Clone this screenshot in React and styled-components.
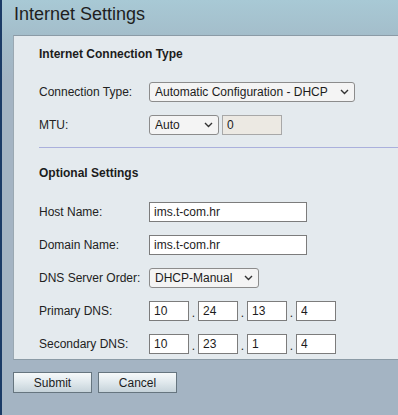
import React from 'react';
import styled, { createGlobalStyle } from 'styled-components';

const GlobalStyle = createGlobalStyle`
  html, body {
    margin: 0;
    padding: 0;
    background: #a4b4c3;
  }
  body {
    font-family: "Liberation Sans", Arial, sans-serif;
    color: #1c1c1c;
  }
`;

const Page = styled.div`
  width: 398px;
  height: 415px;
  box-sizing: border-box;
  border-left: 2px solid #1b3b66;
  background: linear-gradient(to bottom, #a8c9d5 0px, #a3bcc9 40px, #a4b4c3 80px, #a4b4c3 100%);
  overflow: hidden;
`;

const Header = styled.div`
  height: 35px;
  box-sizing: border-box;
  padding: 3px 0 0 12px;
`;

const Title = styled.h1`
  margin: 0;
  font-size: 18px;
  font-weight: normal;
  line-height: 22px;
  color: #1e1e1e;
`;

const Panel = styled.div`
  margin-left: 11px;
  background: #e4eaee;
  border-top: 1px solid #8b9ba6;
  border-left: 1px solid #9aa8b2;
  border-bottom: 1px solid #8b9ba6;
  padding: 11px 0 5px 25px;
`;

const SectionTitle = styled.div`
  font-size: 12px;
  font-weight: bold;
  line-height: 14px;
  margin-bottom: ${({ $gap }) => $gap}px;
`;

const Rows = styled.div`
  display: flex;
  flex-direction: column;
  gap: 13px;
`;

const Row = styled.div`
  display: grid;
  grid-template-columns: 110px auto;
  align-items: center;
  height: 20px;
`;

const Label = styled.span`
  font-size: 12px;
  color: #222;
`;

const Controls = styled.div`
  display: flex;
  align-items: center;
`;

const SelectWrap = styled.div`
  position: relative;
  width: ${({ $w }) => $w}px;
  height: 20px;
`;

const Select = styled.select`
  appearance: none;
  width: 100%;
  height: 100%;
  box-sizing: border-box;
  border: 1px solid #8c8c8c;
  border-radius: 3px;
  background: #f4f4f4;
  font-family: inherit;
  font-size: 12px;
  color: #1c1c1c;
  padding: 0 0 0 5px;
  margin: 0;
  outline: none;
`;

const Chevron = styled.svg`
  position: absolute;
  right: 6px;
  top: 7px;
  width: 9px;
  height: 6px;
  pointer-events: none;
`;

const TextInput = styled.input`
  width: ${({ $w }) => $w}px;
  height: 20px;
  box-sizing: border-box;
  border: 1px solid #7c7c7c;
  background: ${({ disabled }) => (disabled ? '#ece9e3' : '#fff')};
  font-family: inherit;
  font-size: 12px;
  color: #1c1c1c;
  padding: 0 0 0 4px;
  margin: 0 0 0 ${({ $ml }) => $ml || 0}px;
  outline: none;
  &:disabled {
    border-color: #a8a8a8;
    color: #1c1c1c;
  }
`;

const Dot = styled.span`
  width: 9px;
  text-align: center;
  font-size: 12px;
  align-self: flex-end;
  line-height: 16px;
`;

const Divider = styled.div`
  height: 1px;
  background: #aab0dc;
  margin: 12px 0 18px;
`;

const Buttons = styled.div`
  display: flex;
  gap: 6px;
  margin: 12px 0 0 11px;
`;

const Button = styled.button`
  width: 79px;
  height: 21px;
  box-sizing: border-box;
  border: 1px solid #66757f;
  background: linear-gradient(to bottom, #f6f9fa 0%, #e2eaee 45%, #c6d3da 100%);
  font-family: inherit;
  font-size: 12px;
  color: #1c1c1c;
  padding: 0;
`;

const SelectBox = ({ width, value, options }) => (
  <SelectWrap $w={width}>
    <Select defaultValue={value}>
      {options.map((o) => (
        <option key={o}>{o}</option>
      ))}
    </Select>
    <Chevron viewBox="0 0 9 6">
      <path d="M1 1 L4.5 4.5 L8 1" fill="none" stroke="#333" strokeWidth="1.4" />
    </Chevron>
  </SelectWrap>
);

const IpField = ({ parts }) => (
  <Controls>
    {parts.map((p, i) => (
      <React.Fragment key={i}>
        {i > 0 && <Dot>.</Dot>}
        <TextInput $w={40} defaultValue={p} />
      </React.Fragment>
    ))}
  </Controls>
);

export default function App() {
  return (
    <>
      <GlobalStyle />
      <Page>
        <Header>
          <Title>Internet Settings</Title>
        </Header>
        <Panel>
          <SectionTitle $gap={21}>Internet Connection Type</SectionTitle>
          <Rows>
            <Row>
              <Label>Connection Type:</Label>
              <SelectBox width={206} value="Automatic Configuration - DHCP" options={['Automatic Configuration - DHCP']} />
            </Row>
            <Row>
              <Label>MTU:</Label>
              <Controls>
                <SelectBox width={70} value="Auto" options={['Auto', 'Manual']} />
                <TextInput $w={60} $ml={3} defaultValue="0" disabled />
              </Controls>
            </Row>
          </Rows>
          <Divider />
          <SectionTitle $gap={22}>Optional Settings</SectionTitle>
          <Rows>
            <Row>
              <Label>Host Name:</Label>
              <TextInput $w={158} defaultValue="ims.t-com.hr" />
            </Row>
            <Row>
              <Label>Domain Name:</Label>
              <TextInput $w={158} defaultValue="ims.t-com.hr" />
            </Row>
            <Row>
              <Label>DNS Server Order:</Label>
              <SelectBox width={110} value="DHCP-Manual" options={['DHCP-Manual']} />
            </Row>
            <Row>
              <Label>Primary DNS:</Label>
              <IpField parts={['10', '24', '13', '4']} />
            </Row>
            <Row>
              <Label>Secondary DNS:</Label>
              <IpField parts={['10', '23', '1', '4']} />
            </Row>
          </Rows>
        </Panel>
        <Buttons>
          <Button>Submit</Button>
          <Button>Cancel</Button>
        </Buttons>
      </Page>
    </>
  );
}
